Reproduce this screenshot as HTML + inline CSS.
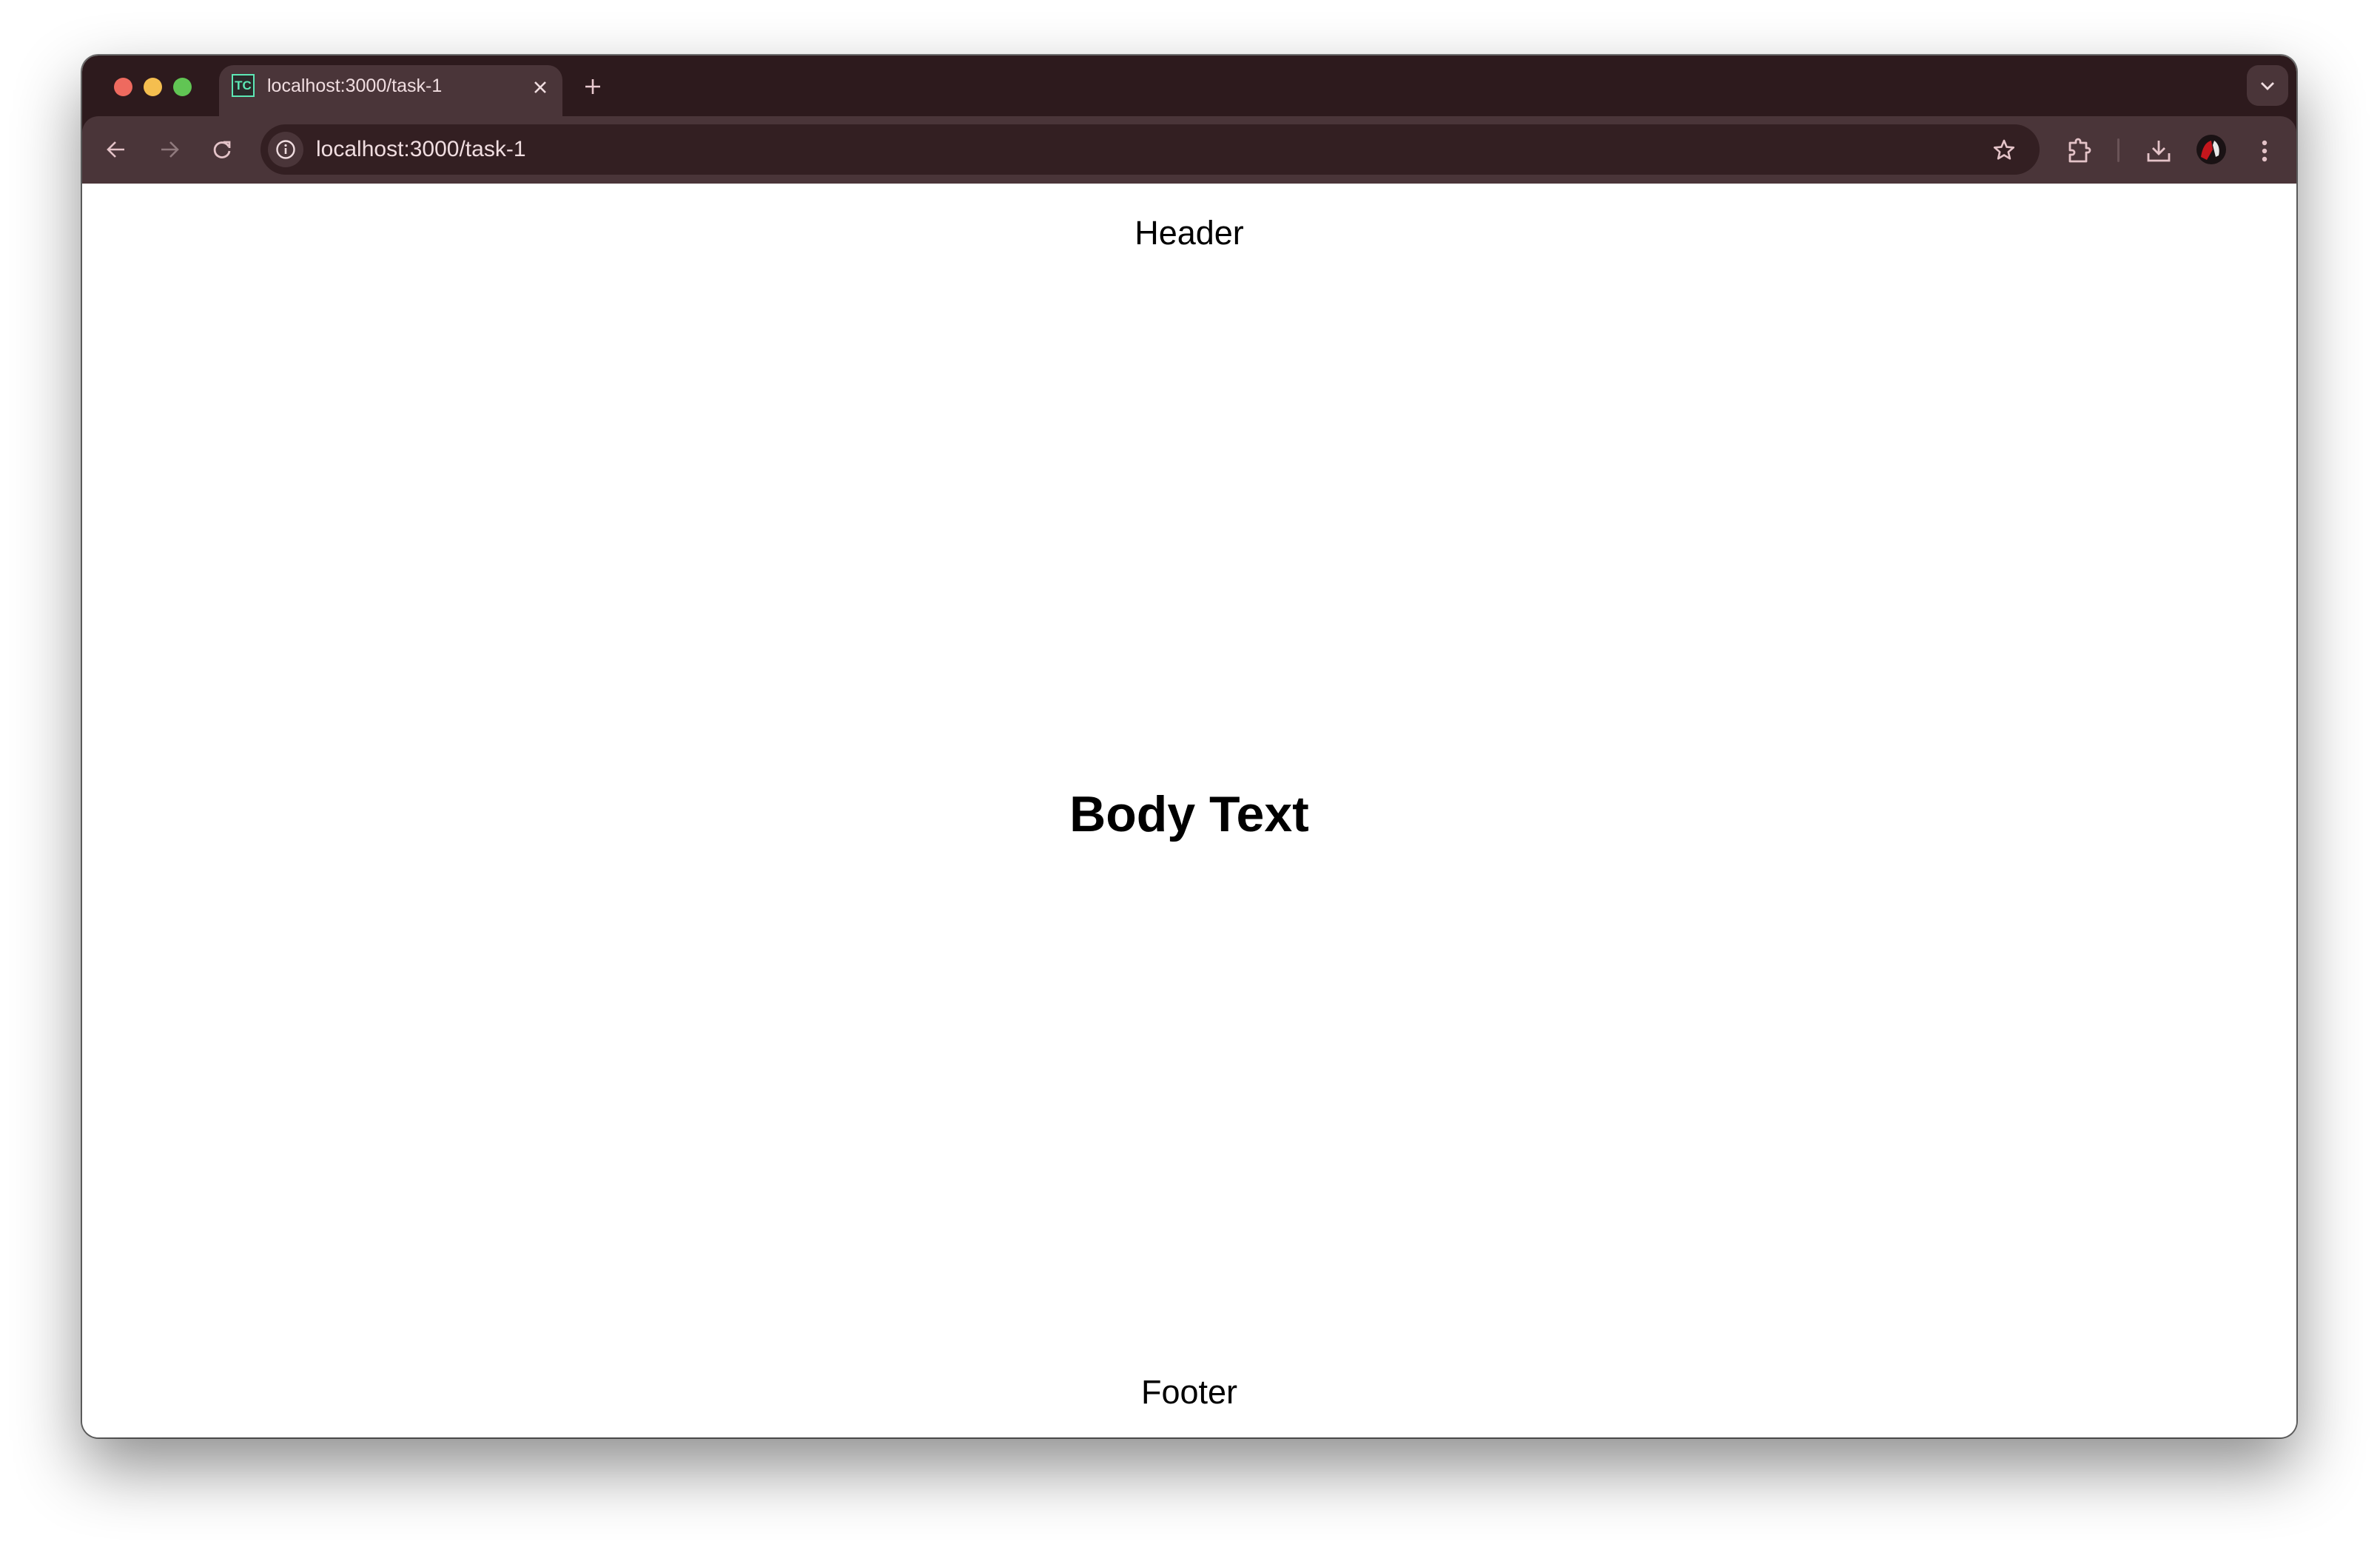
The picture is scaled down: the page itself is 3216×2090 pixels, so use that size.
<!DOCTYPE html>
<html><head><meta charset="utf-8">
<style>
html,body{margin:0;padding:0;background:#fff;width:3216px;height:2090px;overflow:hidden;font-family:"Liberation Sans",Arial,sans-serif;}
.win{position:absolute;left:111px;top:75px;width:2992px;height:1867px;border-radius:22px;background:#fff;overflow:hidden;
 box-shadow:0 40px 90px rgba(0,0,0,0.45),0 0 0 2px rgba(0,0,0,0.55);}
.frame{position:absolute;left:0;top:0;width:100%;height:173px;background:#2d1a1d;}
.toolbar{position:absolute;left:0;top:82px;width:100%;height:91px;background:#4a3539;border-radius:22px 22px 0 0;}
.tab{position:absolute;left:185px;top:13px;width:464px;height:80px;background:#4a3539;border-radius:20px 20px 0 0;}
.light{position:absolute;top:30px;width:25px;height:25px;border-radius:50%;}
.omni{position:absolute;left:241px;top:93px;width:2404px;height:68px;border-radius:34px;background:#331f22;}
.chip{position:absolute;left:251px;top:103px;width:48px;height:48px;border-radius:50%;background:#4a3539;}
.t{position:absolute;white-space:nowrap;color:#f0dde0;}
.page{position:absolute;left:0;top:173px;width:100%;bottom:0;background:#fff;}
.c{position:absolute;left:0;width:100%;text-align:center;color:#000;white-space:nowrap;}
svg{position:absolute;overflow:visible}
</style></head><body>
<div class="win">
 <div class="frame"></div>
 <div class="toolbar"></div>
 <div class="tab"></div>
 <div class="light" style="left:43px;background:#ee6a5f"></div>
 <div class="light" style="left:83px;background:#f5be4f"></div>
 <div class="light" style="left:123px;background:#61c554"></div>
 <div style="position:absolute;left:202px;top:25px;width:27px;height:27px;border:2px solid #5de8b5;background:#2a2a2a;color:#5de8b5;font-weight:bold;font-size:17px;line-height:27px;text-align:center;">TC</div>
 <div class="t" style="left:250px;top:26px;font-size:25px;line-height:30px;">localhost:3000/task-1</div>
 <svg style="left:609px;top:33px" width="20" height="20"><path d="M3 3L17 17M17 3L3 17" stroke="#f0dde0" stroke-width="2.6"/></svg>
 <svg style="left:679px;top:31px" width="22" height="22"><path d="M11 1V21M1 11H21" stroke="#e9c9cf" stroke-width="2.6"/></svg>
 <div style="position:absolute;left:2925px;top:13px;width:56px;height:55px;border-radius:16px;background:#4a3539"></div>
 <svg style="left:2943px;top:35px" width="20" height="12"><path d="M2 2L10 10L18 2" fill="none" stroke="#f0dde0" stroke-width="2.8"/></svg>
 <svg style="left:33px;top:115px" width="26" height="24"><path d="M24 12H3M12 2L2 12L12 22" fill="none" stroke="#e4c3c8" stroke-width="2.6"/></svg>
 <svg style="left:105px;top:115px" width="26" height="24"><path d="M2 12H23M14 2L24 12L14 22" fill="none" stroke="#8f7a7d" stroke-width="2.6"/></svg>
 <svg style="left:177px;top:114px" width="26" height="26"><path d="M21 9A10 10 0 1 0 22 15" fill="none" stroke="#e4c3c8" stroke-width="2.8"/><path d="M14 3H22V11" fill="none" stroke="#e4c3c8" stroke-width="2.8"/></svg>
 <div class="omni"></div>
 <div class="chip"></div>
 <svg style="left:262px;top:114px" width="26" height="26"><circle cx="13" cy="13" r="11.5" fill="none" stroke="#f0dde0" stroke-width="2.4"/><path d="M13 11V19" stroke="#f0dde0" stroke-width="2.6"/><circle cx="13" cy="7.5" r="1.6" fill="#f0dde0"/></svg>
 <div class="t" style="left:316px;top:109px;font-size:30px;line-height:36px;">localhost:3000/task-1</div>
 <svg style="left:2582px;top:113px" width="30" height="28"><path d="M15 2L18.6 10.6L27.8 11.3L20.8 17.3L22.9 26.3L15 21.5L7.1 26.3L9.2 17.3L2.2 11.3L11.4 10.6Z" fill="none" stroke="#e4c3c8" stroke-width="2.6" stroke-linejoin="round"/></svg>
 <svg style="left:2683px;top:113px" width="32" height="32"><path d="M3 5H11V3A3 3 0 0 1 17 3V5H25V12H27A3 3 0 0 1 27 18H25V30H3V21H6A3 3 0 0 0 6 15H3Z" fill="none" stroke="#e4c3c8" stroke-width="2.8" stroke-linejoin="round"/></svg>
 <div style="position:absolute;left:2750px;top:112px;width:3px;height:32px;background:#6a5357;border-radius:2px"></div>
 <svg style="left:2790px;top:113px" width="32" height="32"><path d="M16 2V20M8 12L16 20L24 12" fill="none" stroke="#e4c3c8" stroke-width="2.8"/><path d="M2 19V29H30V19" fill="none" stroke="#e4c3c8" stroke-width="2.8"/></svg>
 <svg style="left:2857px;top:107px" width="40" height="40"><circle cx="20" cy="20" r="20" fill="#1a1214"/><path d="M6 30C8 18 12 10 20 8L22 20L14 34Z" fill="#c4161c"/><path d="M24 8C30 12 32 20 30 28L26 30L22 14Z" fill="#e8e8e8"/></svg>
 <svg style="left:2944px;top:114px" width="10" height="30"><circle cx="5" cy="4" r="3.2" fill="#e4c3c8"/><circle cx="5" cy="15" r="3.2" fill="#e4c3c8"/><circle cx="5" cy="26" r="3.2" fill="#e4c3c8"/></svg>
 <div class="page">
  <div class="c" style="top:41px;font-size:45px;line-height:52px;">Header</div>
  <div class="c" style="top:812px;font-size:68px;line-height:80px;font-weight:bold;">Body Text</div>
  <div class="c" style="top:1607px;font-size:45px;line-height:52px;">Footer</div>
 </div>
</div>
</body></html>
